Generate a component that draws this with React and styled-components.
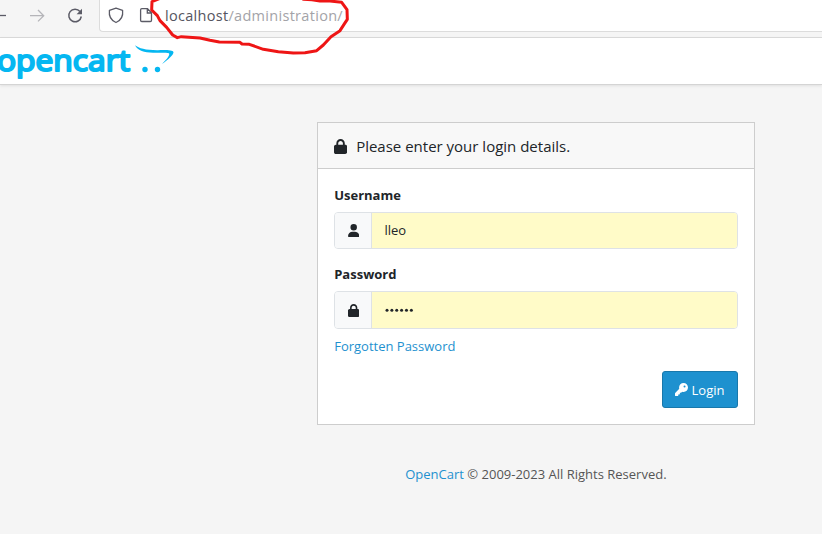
import React from "react";
import styled, { createGlobalStyle } from "styled-components";

const GlobalStyle = createGlobalStyle`
  * { box-sizing: border-box; }
  html, body { margin: 0; height: 100%; overflow: hidden; background: #f5f5f5; }
  body { font: 13px/20px "Open Sans", sans-serif; color: #212529; }
`;

const Page = styled.div`
  position: relative;
  height: 534px;
  display: flex;
  flex-direction: column;
  overflow: hidden;
`;

const BrowserBar = styled.div`
  height: 38px;
  flex: none;
  display: flex;
  align-items: flex-start;
  border-bottom: 1px solid #dbdbdb;
  background: #f5f5f5;
`;

const NavIcons = styled.svg`
  width: 99px;
  height: 32px;
  flex: none;
  fill: none;
  stroke: #5b5b66;
  stroke-width: 1.3;
`;

const AddressField = styled.div`
  flex: 1;
  height: 32px;
  display: flex;
  background: #fff;
  border: 1px solid #dcdcdc;
  border-width: 0 0 1px 1px;
  border-radius: 0 0 0 4px;
`;

const FieldIcons = styled(NavIcons)`
  width: 65px;
`;

const Url = styled.span`
  font-size: 14.5px;
  line-height: 31px;
  letter-spacing: ${(p) => p.$spacing};
  white-space: nowrap;
  color: ${(p) => p.$color};
`;

const SiteHeader = styled.header`
  height: 47px;
  flex: none;
  background: #fff;
  border-bottom: 1px solid #d4d4d4;
  box-shadow: 0 1px 3px rgba(0, 0, 0, 0.09);
`;

const Logo = styled.svg`
  display: block;
  width: 180px;
  height: 46px;
  fill: #05b7f1;
  text {
    font: 500 30px "Open Sans", sans-serif;
    stroke: #05b7f1;
    stroke-width: 2.1;
    stroke-linejoin: round;
  }
`;

const Card = styled.form`
  width: 438px;
  height: 303px;
  margin: 37px 0 0 317px;
  flex: none;
  background: #fff;
  border: 1px solid #cdcdcd;
`;

const CardTitle = styled.div`
  height: 46px;
  display: flex;
  align-items: center;
  gap: 9px;
  padding: 1px 16px 0;
  border-bottom: 1px solid #cdcdcd;
  background: #f8f8f8;
  font-size: 15px;
`;

const CardBody = styled.div`
  padding: 16px 16px 0;
`;

const Label = styled.label`
  display: block;
  height: 20px;
  margin-bottom: 7px;
  padding-left: 0.2px;
  font-weight: 700;
`;

const InputGroup = styled.div`
  height: ${(p) => p.$height};
  display: flex;
  margin-bottom: ${(p) => p.$gap};
  border: 1px solid #dee2e6;
  border-radius: 4px;
  overflow: hidden;
`;

const Addon = styled.span`
  width: 37px;
  display: grid;
  place-items: center;
  padding-left: 0.5px;
  background: #f8f9fa;
  border-right: 1px solid #dee2e6;
`;

const Input = styled.input`
  flex: 1;
  padding: 0 12px 2px 12.4px;
  border: 0;
  outline: 0;
  background: #fffbc8;
  color: #212529;
  font: 13px "Open Sans", sans-serif;
`;

const Dots = styled.svg`
  flex: 1;
  height: 100%;
  background: #fffbc8;
  fill: #212529;
`;

const Link = styled.a`
  color: #1e91cf;
  padding-left: 0.2px;
`;

const Actions = styled.div`
  display: flex;
  justify-content: flex-end;
  margin-top: 15px;
`;

const LoginButton = styled.button`
  width: 76px;
  height: 37px;
  display: flex;
  align-items: center;
  justify-content: center;
  gap: 3.5px;
  padding: 0 0.5px 0 0;
  border: 1px solid #1978ab;
  border-radius: 3px;
  background: #1e91cf;
  color: #fff;
  font: 13px "Open Sans", sans-serif;
`;

const Footer = styled.footer`
  margin: 39px 0 0 317px;
  width: 438px;
  padding-right: 0.4px;
  text-align: center;
  color: #555;
`;

const Scribble = styled.svg`
  position: absolute;
  left: 150px;
  top: 0;
  width: 205px;
  height: 60px;
  fill: none;
  stroke: #ee1515;
  stroke-width: 9;
  stroke-linejoin: round;
  stroke-linecap: round;
  pointer-events: none;
`;

const LockIcon = ({ size }) => (
  <svg width={(size * 14) / 16} height={size} viewBox="0 0 448 512" fill="#212529">
    <path d="M144 144v48H304V144c0-44.200-35.800-80-80-80s-80 35.800-80 80zM80 192V144C80 64.500 144.500 0 224 0s144 64.500 144 144v48h16c35.300 0 64 28.700 64 64V448c0 35.300-28.700 64-64 64H64c-35.300 0-64-28.700-64-64V256c0-35.300 28.700-64 64-64H80z" />
  </svg>
);

const UserIcon = () => (
  <svg width="11.4" height="13" viewBox="0 0 448 512" fill="#212529">
    <path d="M224 256A128 128 0 1 0 224 0a128 128 0 1 0 0 256zm-45.700 48C79.800 304 0 383.800 0 482.300C0 498.700 13.300 512 29.700 512H418.300c16.400 0 29.700-13.300 29.700-29.700C448 383.800 368.200 304 269.700 304H178.300z" />
  </svg>
);

const KeyIcon = () => (
  <svg width="13" height="13" viewBox="0 0 512 512" fill="#fff">
    <path d="M336 352c97.200 0 176-78.800 176-176S433.200 0 336 0S160 78.800 160 176c0 18.700 2.900 36.800 8.300 53.700L7 391c-4.500 4.500-7 10.600-7 17v80c0 13.300 10.700 24 24 24h80c13.300 0 24-10.700 24-24V448h40c13.300 0 24-10.700 24-24V384h40c6.400 0 12.500-2.500 17-7l33.300-33.300c16.900 5.400 35 8.300 53.700 8.300zM376 96a40 40 0 1 1 0 80 40 40 0 1 1 0-80z" />
  </svg>
);

export default function App() {
  return (
    <Page>
      <GlobalStyle />
      <BrowserBar>
        <NavIcons viewBox="0 0 99 32">
          <path d="M-4 15.500H6" />
          <path d="M30 15.700H43.500M38 10l5.700 5.700L38 21.400" stroke="#b5b5b9" />
          <path d="M80 11.500A6.300 6.300 0 1 0 81.300 16.500" strokeWidth="1.500" />
          <path d="M82 8.800v5.400h-5.400z" fill="#5b5b66" stroke="none" />
        </NavIcons>
        <AddressField>
          <FieldIcons viewBox="100 0 65 32">
            <path d="M116 8.100L122.600 10.300C123.200 15.500 121 20.500 116 22.500C111 20.500 108.800 15.500 109.400 10.300Z" strokeLinejoin="round" />
            <path d="M141.800 8.700H147.500L151.500 12.700V20.300Q151.500 21.500 150.300 21.500H141.800Q140.600 21.500 140.600 20.300V9.900Q140.600 8.700 141.800 8.700ZM147.300 8.700V13H151.500" />
          </FieldIcons>
          <Url $color="#55555f" $spacing="0.3px">localhost</Url>
          <Url $color="#a3a3a8" $spacing="0.3px">/administration/</Url>
        </AddressField>
      </BrowserBar>
      <SiteHeader>
        <Logo viewBox="0 38 180 46" role="img" aria-label="opencart">
          <text x="-3" y="70.500" textLength="133" lengthAdjust="spacingAndGlyphs">opencart</text>
          <path d="M135 45.300C138 51 144 52.500 153 52.700C161 52.900 167 52.500 169 53.300C170 55 168 58 162 64C168 60 173.500 55 173.500 52.300C173 50 166 50 158 50.200C146 50.300 139 48.500 135 45.300Z" />
          <circle cx="145" cy="69.500" r="2.700" />
          <circle cx="157.500" cy="69.500" r="2.700" />
        </Logo>
      </SiteHeader>
      <Card>
        <CardTitle>
          <LockIcon size={15} />
          <span>Please enter your login details.</span>
        </CardTitle>
        <CardBody>
          <Label>Username</Label>
          <InputGroup $height="37px" $gap="15px">
            <Addon><UserIcon /></Addon>
            <Input defaultValue="lleo" aria-label="Username" />
          </InputGroup>
          <Label>Password</Label>
          <InputGroup $height="38px" $gap="7px">
            <Addon><LockIcon size={13} /></Addon>
            <Dots viewBox="0 0 365 36" preserveAspectRatio="xMinYMid meet" role="img" aria-label="Password">
              {[0, 1, 2, 3, 4, 5].map((i) => (
                <circle key={i} cx={15 + i * 4.87} cy="18.300" r="1.500" />
              ))}
            </Dots>
          </InputGroup>
          <Link>Forgotten Password</Link>
          <Actions>
            <LoginButton type="button"><KeyIcon />Login</LoginButton>
          </Actions>
        </CardBody>
      </Card>
      <Footer><Link>OpenCart</Link> © 2009-2023 All Rights Reserved.</Footer>
      <Scribble viewBox="0 0 615 180">
        <path d="M28 -4L6 5L5 30L22 47L30 62L50 82L68 105L82 113L94 110L150 114L180 121L208 126L270 127L276 132L298 133L340 148L385 155L430 159L465 158L500 152L520 135L543 110L570 92L584 70L592 58L591 29L575 7L540 3L510 3L486 -1L460 -2" />
      </Scribble>
    </Page>
  );
}
